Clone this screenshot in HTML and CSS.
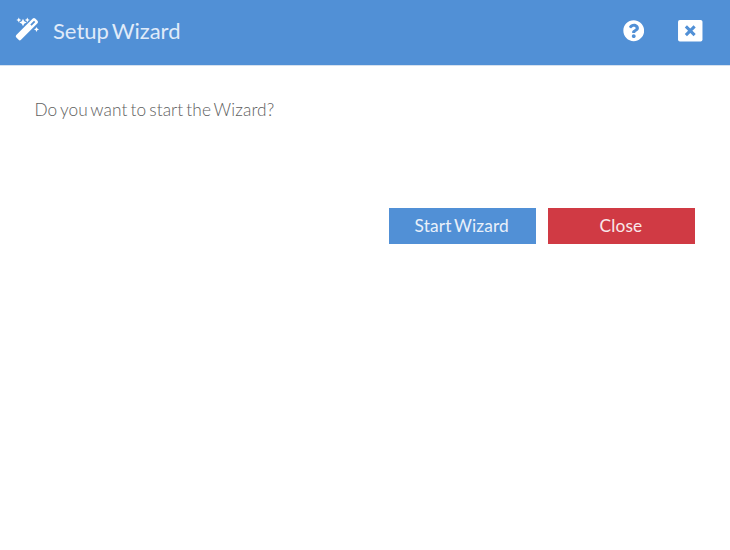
FILE: index.html
```html
<!DOCTYPE html>
<html lang="en">
<head>
<meta charset="utf-8">
<title>Setup Wizard</title>
<link rel="stylesheet" href="styles.css">
</head>
<body>
<header class="bar">
  <svg class="wand" viewBox="0 0 24 24" aria-hidden="true"><path fill-rule="evenodd" d="M17.800 1.500a1.700 1.700 0 0 1 2.400 0l2.300 2.300a1.700 1.700 0 0 1 0 2.400L6 22.800a1.700 1.700 0 0 1-2.400 0l-2.300-2.300a1.700 1.700 0 0 1 0-2.400zM19 3.700l-3.700 3.700 1.300 1.300 3.700-3.700zM3.800.5l.8 1.700 1.700.8-1.700.8-.8 1.700-.8-1.700L1.300 3 3 2.200zM8 1.800l1.200 2.500 2.500 1.200-2.500 1.200L8 9.200 6.800 6.700 4.300 5.500l2.500-1.200zM12.300.5l.8 1.700 1.700.8-1.700.8-.8 1.700-.8-1.700L9.800 3l1.700-.8zM21.500 9.900l.8 1.700 1.700.8-1.700.8-.8 1.700-.8-1.700-1.700-.8 1.700-.8z"/></svg>
  <h1 class="title">Setup Wizard</h1>
  <button class="icon-btn help" aria-label="Help"><svg viewBox="0 0 512 512"><path d="M504 256c0 136.997-111.043 248-248 248S8 392.997 8 256C8 119.083 119.043 8 256 8s248 111.083 248 248zM262.655 90c-54.497 0-89.255 22.957-116.549 63.758-3.536 5.286-2.353 12.415 2.715 16.258l34.699 26.310c5.205 3.947 12.621 3.008 16.665-2.122 17.864-22.658 30.113-35.797 57.303-35.797 20.429 0 45.698 13.148 45.698 32.958 0 14.976-12.363 22.667-32.534 33.976C247.128 238.528 216 254.941 216 296v4c0 6.627 5.373 12 12 12h56c6.627 0 12-5.373 12-12v-1.333c0-28.462 83.186-29.647 83.186-106.667 0-58.002-60.165-102-116.531-102zM256 338c-25.365 0-46 20.635-46 46 0 25.364 20.635 46 46 46s46-20.636 46-46c0-25.365-20.635-46-46-46z"/></svg></button>
  <button class="icon-btn close" aria-label="Close window"><svg viewBox="0 0 24 21"><rect width="24" height="21" rx="1.800"/><path class="cross" d="M7.700 6.200l8.600 8.600M16.300 6.200l-8.600 8.600"/></svg></button>
</header>
<main class="content">
  <p class="question">Do you want to start the Wizard?</p>
  <div class="actions">
    <button class="btn primary">Start Wizard</button>
    <button class="btn danger">Close</button>
  </div>
</main>
</body>
</html>
```
FILE: styles.css
```css
body { margin: 0; background: #fff; font-family: Lato, sans-serif; }
button { border: 0; padding: 0; font: inherit; color: #fff; }
svg { display: block; fill: #fff; }
.bar { display: flex; align-items: center; box-sizing: border-box; height: 66px; padding: 0 27.500px 3px 15px; border-bottom: 1px solid #d5e1ef; background: #5190d6; color: #e0ebf9; }
.wand { width: 24px; height: 24px; margin-bottom: 4px; }
.title { margin: 0 auto 0 14px; font-size: 22px; font-weight: 400; line-height: 30px; word-spacing: -2.500px; }
.icon-btn { background: none; }
.help svg { width: 21.500px; height: 21.500px; }
.close { margin-left: 34px; }
.close svg { width: 24.500px; height: 21.400px; }
.cross { stroke: #5190d6; stroke-width: 3; }
.content { padding: 31px 35px 31px 34.500px; }
.question { margin: 0; font-size: 17.300px; font-weight: 300; line-height: 26px; letter-spacing: 0.09px; word-spacing: -1.800px; color: #606060; }
.actions { display: flex; justify-content: flex-end; gap: 12px; margin-top: 85px; }
.btn { box-sizing: border-box; width: 147px; height: 36px; padding: 0 1px 1px 0; font-size: 17.300px; letter-spacing: 0.15px; word-spacing: -2px; color: #e9f0fa; }
.primary { width: 147.500px; background: #5190d6; }
.danger { background: #d03a44; color: #f9e8ea; }
```
